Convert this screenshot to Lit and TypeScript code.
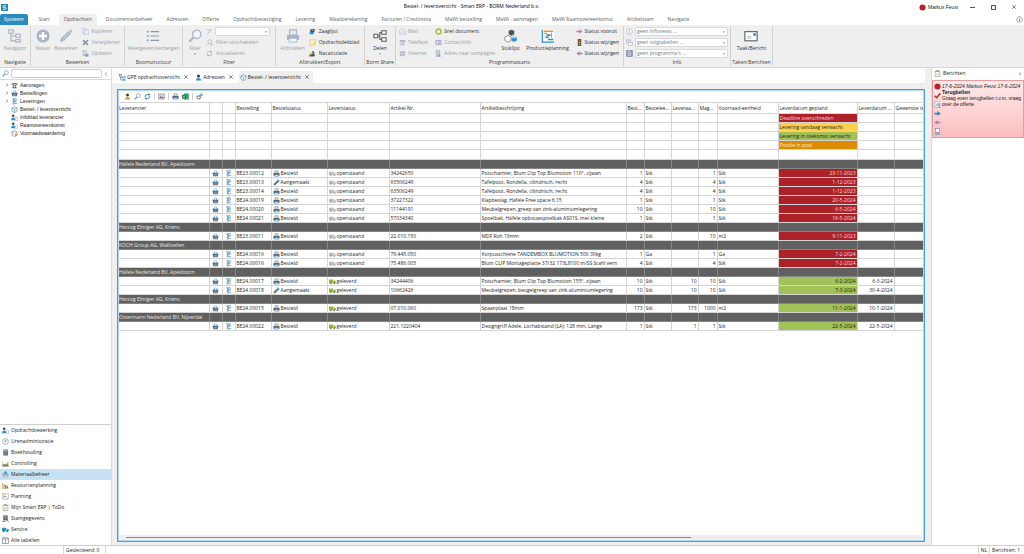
import { LitElement, html, css, svg } from "lit";
import { customElement } from "lit/decorators.js";
import { classMap } from "lit/directives/class-map.js";

const BLUE = "#2f8fc7";
const MUTE = "#a9b4c8";
const DARK = "#555b60";

/* 16 x 16 glyphs used by every bar, tree and table cell */
const glyphs: Record<string, unknown> = {
  logo: svg`<rect width="16" height="16" fill="#2586bd"/><path d="M11.5 4H6.2Q4.5 4 4.5 6T6.200 8H9.800Q11.5 8 11.5 10T9.800 12H4.500" fill="none" stroke="#fff" stroke-width="2"/>`,
  tree: svg`<g fill="none" stroke="${MUTE}" stroke-width="1.300"><rect x="1" y="1" width="5" height="4"/><rect x="9" y="6" width="5" height="3.500"/><rect x="9" y="12" width="5" height="3"/><path d="M3.500 5V13.500H9M3.500 8H9"/></g>`,
  treeDark: svg`<g fill="none" stroke="#60717d" stroke-width="1.400"><rect x="1" y="1" width="5" height="4"/><rect x="9" y="6" width="5" height="3.500" stroke="${BLUE}"/><rect x="9" y="12" width="5" height="3" stroke="${BLUE}"/><path d="M3.500 5V13.500H9M3.500 8H9"/></g>`,
  plus: svg`<circle cx="8" cy="8" r="7.500" fill="${MUTE}"/><path d="M8 3.500V12.500M3.500 8H12.500" stroke="#fff" stroke-width="2.800"/>`,
  pencil: svg`<path d="M1 15L2.500 10.500L11 2L14 5L5.500 13.500Z" fill="${MUTE}"/><path d="M11.700 1.300Q13 0 14.500 1.500T14.700 4.300Z" fill="${MUTE}"/><path d="M4.500 11.500L11.500 4.500" stroke="#eee" stroke-width=".9"/>`,
  pencilDark: svg`<path d="M1 15L2.500 10.500L11 2L14 5L5.500 13.500Z" fill="#5b6c78"/><path d="M10 1L15 5.500" stroke="${BLUE}" stroke-width="2"/>`,
  copy: svg`<g fill="#eef1f6" stroke="${MUTE}" stroke-width="1.300"><path d="M1.500 1H7L9.500 4V12H1.500Z"/><path d="M6 4H12L14.500 7V15H6Z"/></g>`,
  cross: svg`<path d="M2.500 2.500L13.500 13.500M13.500 2.500L2.500 13.500" stroke="#8e99ac" stroke-width="4"/>`,
  update: svg`<path d="M2 1H9L11 4V13H2Z" fill="#c5cddb" stroke="${MUTE}"/><path d="M4 5H9M4 8H9" stroke="#fff"/><path d="M7 9H15V15H7Z" fill="#8fa0bb"/>`,
  list: svg`<g fill="#9aa5ba"><circle cx="2" cy="3" r="1.200"/><circle cx="2" cy="8" r="1.200"/><circle cx="2" cy="13" r="1.200"/></g><path d="M5 3H15M5 8H15M5 13H15" stroke="#8d98ac" stroke-width="1.400"/>`,
  lens: svg`<circle cx="10" cy="6" r="4.800" fill="#f3f5f8" stroke="${MUTE}" stroke-width="1.400"/><path d="M6.500 9.500L1.500 14.500" stroke="${MUTE}" stroke-width="2.600"/>`,
  lensDark: svg`<circle cx="10" cy="6" r="4.500" fill="#fff" stroke="#6d7d89" stroke-width="1.300"/><path d="M6.500 9.500L1.500 14.500" stroke="${BLUE}" stroke-width="2.400"/>`,
  wrench: svg`<path d="M3 14L9 7L13 3M2 3L5 6L9 3" fill="none" stroke="${MUTE}" stroke-width="2"/>`,
  lensOff: svg`<circle cx="9" cy="6" r="4.500" fill="none" stroke="${MUTE}" stroke-width="1.500"/><path d="M6 9.500L2 14M10 11L15 15M15 11L10 15" stroke="${MUTE}" stroke-width="1.600"/>`,
  refresh: svg`<path d="M3 9V6Q3 3.500 6 3.500H11M13 7V10Q13 12.500 10 12.500H5" fill="none" stroke="${MUTE}" stroke-width="2.200"/><path d="M10 0L14.500 3.500L10 7ZM6 9L1.500 12.500L6 16Z" fill="${MUTE}"/>`,
  refreshBlue: svg`<path d="M2.500 9Q2.500 3.500 8 3.500H11M13.500 7Q13.500 12.500 8 12.500H5" fill="none" stroke="${BLUE}" stroke-width="2.200"/><path d="M10 0L14.500 3.500L10 7Z" fill="#56646e"/><path d="M6 9L1.500 12.500L6 16Z" fill="${BLUE}"/>`,
  printer: svg`<path d="M4 1H12V7H4Z" fill="#e3e7ee" stroke="${MUTE}" stroke-width="1.200"/><path d="M1 7H15V12.500H1Z" fill="${MUTE}"/><path d="M3.500 10.500H12.500V15H3.500Z" fill="#f2f4f8" stroke="${MUTE}"/>`,
  printerDark: svg`<path d="M4.500 2H11.500V7H4.500Z" fill="#fff" stroke="#53636f" stroke-width="1.300"/><path d="M1 7H15V13H1Z" fill="#53636f"/><path d="M4 11H12V14.500H4Z" fill="#fff" stroke="${BLUE}" stroke-width="1.200"/>`,
  saw: svg`<path d="M4 2H14L12 9H2Z" fill="#44525c"/><path d="M5.500 5H12" stroke="#fff" stroke-width="1.200"/><path d="M2 9L12 9L10 14H1Z" fill="${BLUE}"/>`,
  note: svg`<path d="M1.500 1.500H14.500V10.500L10.500 14.500H1.500Z" fill="#fdf1bd" stroke="#edc44c" stroke-width="1.400"/><path d="M10.500 14.500V10.500H14.500" fill="#edc44c" stroke="#edc44c"/>`,
  calc: svg`<path d="M7 1L13 6L9 9Z" fill="#333b42"/><path d="M1 10Q7 6 14 11L12 15H1Z" fill="#4a545c"/><circle cx="4" cy="9" r="2.600" fill="#f0c12e"/>`,
  share: svg`<g fill="#fff" stroke="${DARK}" stroke-width="1.200"><rect x="1" y="6" width="4.500" height="4"/><rect x="10" y="2" width="5" height="4"/><rect x="10" y="10" width="5" height="4"/><path d="M5.500 8H7.800M10 4H7.800V12H10" fill="none"/></g>`,
  mail: svg`<path d="M1.500 6L8 1.500L14.500 6V14H1.500Z" fill="#f3f5f9" stroke="${MUTE}" stroke-width="1.300"/><path d="M2 13L8 8L14 13" fill="none" stroke="${MUTE}" stroke-width="1.300"/>`,
  phone: svg`<path d="M1 6Q1 2 8 2T15 6H11V4.500H5V6Z" fill="#8d9ab3"/><path d="M5 6H11L13 14H3Z" fill="${MUTE}"/><circle cx="8" cy="10" r="2" fill="#eef"/>`,
  phoneDark: svg`<path d="M1 6Q1 2 8 2T15 6H11V4.500H5V6Z" fill="#4d4f52"/><path d="M5 6H11L13 14H3Z" fill="#5f6265"/><circle cx="8" cy="10" r="2" fill="#fff"/>`,
  globe: svg`<circle cx="8" cy="8" r="6.500" fill="${MUTE}"/><path d="M1.500 8H14.500M8 1.500Q3 8 8 14.500M8 1.500Q13 8 8 14.500" fill="none" stroke="#eef1f7"/>`,
  ring: svg`<circle cx="8" cy="8" r="5.500" fill="#fff" stroke="#9ec436" stroke-width="3.600"/>`,
  card: svg`<rect x="1" y="2" width="14" height="12" fill="#a7b3c9"/><circle cx="5.500" cy="7" r="2" fill="#fff"/><path d="M2.500 13Q5.500 8 8.500 13M10 6H14M10 9H14" fill="none" stroke="#fff"/>`,
  campaign: svg`<path d="M3 1H11V15H3Z" fill="#b8c2d4" stroke="#8f9db7"/><path d="M5 4H9M5 7H9" stroke="#fff"/><path d="M8 10L15 14H8Z" fill="#8090ad"/>`,
  parts: svg`<g stroke="#fff" stroke-width=".5"><path d="M5 2L8.500 .5L12 2V6L8.500 8L5 6Z" fill="#4b5359"/><path d="M1 9L4.500 7.500L8 9V13L4.500 15L1 13Z" fill="#fff" stroke="#666" stroke-width=".8"/><path d="M8 9L11.500 7.500L15 9V13L11.500 15L8 13Z" fill="${BLUE}"/><path d="M8 9L11.500 10.500L15 9L11.500 7.500Z" fill="#9cd0ee"/></g>`,
  gantt: svg`<rect x="1" y="1" width="14" height="14" fill="#fff"/><path d="M1.500 1V15H15" fill="none" stroke="${BLUE}" stroke-width="1.400"/><path d="M3 2.500H14M3 5H7" stroke="#e09b3c" stroke-width="1.600"/><path d="M6 7H11" stroke="#53626c" stroke-width="1.600"/><path d="M5 9.500H9M8 12H14" stroke="${BLUE}" stroke-width="1.600"/><path d="M12 4V10" stroke="#e09b3c" stroke-width="1.300"/>`,
  right: svg`<path d="M1 6.500H8V3L15 8L8 13V9.500H1Z" fill="#b27fb5"/>`,
  left: svg`<path d="M15 6.500H8V3L1 8L8 13V9.500H15Z" fill="#b27fb5"/>`,
  rightBlue: svg`<path d="M1 6H8V2.500L15.500 8L8 13.500V10H1Z" fill="#2f86c0"/>`,
  traffic: svg`<rect x="4" y="0" width="8" height="16" rx="1" fill="#5a5248"/><circle cx="8" cy="3.300" r="2" fill="#d9523f"/><circle cx="8" cy="8" r="2" fill="#e8b93c"/><circle cx="8" cy="12.700" r="2" fill="#7aae3a"/>`,
  info: svg`<circle cx="8" cy="8" r="6.500" fill="#fff" stroke="#8ea6c6" stroke-width="1.300"/><path d="M8 4V5.700M8 7V12" stroke="#7f93b5" stroke-width="1.800"/>`,
  infoBlue: svg`<circle cx="8" cy="8" r="6.500" fill="#fff" stroke="#5a6c79" stroke-width="1.200"/><path d="M8 4V5.700M8 7V12" stroke="${BLUE}" stroke-width="2.200"/>`,
  tables: svg`<g fill="#f3f5f9" stroke="${MUTE}" stroke-width="1.300"><rect x="1.500" y="2" width="9" height="7"/><rect x="6" y="8" width="8.500" height="6.500"/></g><path d="M1.500 4H10.500" stroke="${MUTE}" stroke-width="1.500"/>`,
  program: svg`<rect x=".5" y=".5" width="15" height="15" fill="#7c89a3"/><path d="M5 3.500H9.500Q11.500 4 11 6T9 8Q12 8.500 11.500 10.500T9.500 12.500H5Z" fill="none" stroke="#fff" stroke-width="1.500"/><path d="M5 8H9" stroke="#fff"/>`,
  letter: svg`<rect x="1" y="3" width="14" height="10.500" fill="#fff" stroke="#5b6267" stroke-width="1.300"/><rect x="10.500" y="4.800" width="3" height="3" fill="${BLUE}"/><path d="M3.500 8.500H8.500M3.500 10.500H8.500" stroke="#9aa2a8" stroke-width=".8"/>`,
  basket: svg`<path d="M1 6.500H15L13 14.500H3Z" fill="#566977"/><path d="M4 7L7 1.500M12 7L9 1.500" stroke="${BLUE}" stroke-width="1.600"/><path d="M5.500 8.500V13M8 8.500V13M10.500 8.500V13" stroke="#cfdbe4" stroke-width=".9"/>`,
  handtruck: svg`<path d="M3 1.500H5.500V11.500M5.500 9L12 7.500" fill="none" stroke="#5a6c79" stroke-width="1.500"/><path d="M7 2L11.500 1.200L12.500 5.800L8 6.800Z" fill="#fff" stroke="${BLUE}" stroke-width="1.500"/><circle cx="6.500" cy="12.500" r="1.800" fill="#fff" stroke="#5a6c79" stroke-width="1.300"/><path d="M8.500 13.300L14 12" stroke="${BLUE}" stroke-width="1.600"/>`,
  box: svg`<path d="M2 4.500L8 1.500L14 4.500V11.500L8 15L2 11.500Z" fill="#fff" stroke="#667884" stroke-width="1.300"/><path d="M2 4.500L8 7.500L14 4.500M8 7.500V15" fill="none" stroke="${BLUE}" stroke-width="1.400"/>`,
  personDoc: svg`<circle cx="5" cy="4" r="3" fill="#3f4d57"/><path d="M0 14Q0 8 5 8T9.500 14Z" fill="${BLUE}"/><path d="M10 7H15V15H10Z" fill="#fff" stroke="#8b979f"/>`,
  person: svg`<circle cx="8" cy="4.500" r="3.500" fill="#2f4250"/><path d="M2 15Q2 9 8 9T14 15Z" fill="${BLUE}"/>`,
  personGold: svg`<circle cx="8" cy="4.500" r="3.500" fill="#5c4420"/><path d="M2 15Q2 9 8 9T14 15Z" fill="#e59a24"/>`,
  stock: svg`<path d="M2 4.500L8 1.500L14 4.500V11.500L8 15L2 11.500Z" fill="#fff" stroke="#777" stroke-width="1.400"/><path d="M2 4.500L8 7.500L14 4.500" fill="none" stroke="#777"/><circle cx="11.500" cy="11.500" r="2.700" fill="#d99433"/>`,
  image: svg`<rect x="1" y="2" width="14" height="12" fill="#d9dcde" stroke="#70777c"/><path d="M2.500 12L6 7L9 10L11 8L14 12Z" fill="#6c7378"/><path d="M3 4.500H13" stroke="#9aa0a4"/>`,
  excel: svg`<rect x="5" y="1" width="10.500" height="14" fill="#35a56a"/><rect x="0" y="4" width="9" height="9" fill="#14713f"/><path d="M2.500 6L6.500 11M6.500 6L2.500 11" stroke="#fff" stroke-width="1.300"/>`,
  gears: svg`<circle cx="6" cy="10" r="3.800" fill="none" stroke="#50616d" stroke-width="2.600" stroke-dasharray="2.200 .6"/><circle cx="12" cy="4" r="2.300" fill="none" stroke="${BLUE}" stroke-width="2.200"/>`,
  truckOpen: svg`<path d="M0 4H9.500V11.500H0Z" fill="#b9bbbd"/><path d="M10 6H13.500L15.500 8.500V11.500H10Z" fill="#d6d8da" stroke="#a2a5a8" stroke-width=".8"/><circle cx="4" cy="12" r="1.500" fill="#8b8e91"/><circle cx="12" cy="12" r="1.500" fill="#8b8e91"/>`,
  truckDone: svg`<path d="M0 3.500H9.500V11.500H0Z" fill="#8fb93a"/><path d="M10 5.500H13.500L16 8.500V11.500H10Z" fill="#8fb93a"/><circle cx="4" cy="12.300" r="1.800" fill="#5d6b31"/><circle cx="12" cy="12.300" r="1.800" fill="#5d6b31"/>`,
  truckBlue: svg`<path d="M0 4H9.500V11.500H0Z" fill="${BLUE}"/><path d="M10 6H13.500L16 8.500V11.500H10Z" fill="#3fa6dd"/><circle cx="4" cy="12.300" r="1.800" fill="#38536a"/><circle cx="12" cy="12.300" r="1.800" fill="#38536a"/>`,
  clock: svg`<circle cx="8" cy="8" r="6.500" fill="#fff" stroke="#6b7c88" stroke-width="1.300"/><path d="M8 4V8.500L5 6.500M8 8.500L12 6" fill="none" stroke="${BLUE}" stroke-width="1.300"/>`,
  ledger: svg`<rect x="3" y="1" width="10.500" height="14" rx="1" fill="#5b6b76"/><rect x="4.800" y="2.800" width="7" height="3" fill="#9cc3da"/><path d="M5 8H12M5 10.500H12M5 13H12" stroke="#9fabb4" stroke-dasharray="1.500 1"/>`,
  chart: svg`<path d="M1 3V14.500H15" fill="none" stroke="#6c7c87"/><path d="M2 14V10L6 8L9 10L14.500 3V14Z" fill="#e5972c"/><path d="M2 14V12L7 10L14.500 11V14Z" fill="${BLUE}"/>`,
  stockroom: svg`<path d="M1 8L5 3.500L8 1L11 3.500L15 8L8 15Z" fill="#a9bfcc" stroke="#67808f"/><path d="M8 1V9M5 4.500L8 1L11 4.500" fill="none" stroke="${BLUE}" stroke-width="1.800"/><path d="M3 9L8 11L13 9V13L8 15.500L3 13Z" fill="#e9eef1" stroke="#74858f"/>`,
  resources: svg`<path d="M1 2V15H15" fill="none" stroke="#d39037" stroke-width="1.500"/><path d="M3 5H6V14H3Z" fill="#e3a14a"/><path d="M7 7H10V14H7Z" fill="#6c7b86"/><path d="M11 9H14V14H11Z" fill="${BLUE}"/>`,
  planning: svg`<rect x="1.500" y="1.500" width="13" height="13" fill="#fff" stroke="#8b9aa5"/><path d="M3 4H9" stroke="#dda13b" stroke-width="1.800"/><path d="M5 8H10" stroke="#52606a" stroke-width="1.500"/><path d="M8 11.500H14" stroke="#dda13b" stroke-width="1.800"/><path d="M4 6V13" stroke="${BLUE}"/>`,
  clipboard: svg`<rect x="2.500" y="2.500" width="11" height="12.500" fill="#fff" stroke="#7d8a78" stroke-width="1.300"/><rect x="5.500" y=".8" width="5" height="3" fill="#6f7c6c"/><path d="M5 9L7.500 11.500L11 6.500" fill="none" stroke="#8bb33a" stroke-width="1.500"/>`,
  master: svg`<rect x="3" y="1" width="10" height="11" fill="#515c64"/><path d="M5 3.500H11M5 6H11M5 8.500H11" stroke="#c9d0d5"/><path d="M1 14.500H8M10 11L15 15" stroke="#4d5860" stroke-width="1.800"/>`,
  table: svg`<rect x="1.500" y="2" width="13" height="12.500" fill="#fff" stroke="#5e666c" stroke-width="1.300"/><path d="M1.500 4.500H14.500M8 4.500V14.500" stroke="#5e666c" stroke-width="1.300"/>`,
  dot: svg`<circle cx="8" cy="8" r="7" fill="#b8202e"/>`,
  check: svg`<path d="M1.500 8.500L6 13L14.500 3" fill="none" stroke="#b8202e" stroke-width="3.200"/>`,
  docLens: svg`<path d="M2 1H10L13 4V15H2Z" fill="#fff" stroke="#7f8c96" stroke-width="1.200"/><circle cx="9" cy="9" r="3.200" fill="#bfe0f3" stroke="${BLUE}" stroke-width="1.200"/><path d="M11 11L15 15" stroke="${BLUE}" stroke-width="1.600"/>`,
  pc: svg`<rect x="3" y="1.500" width="10" height="8.500" fill="#fff" stroke="#6b7881" stroke-width="1.300"/><path d="M5.500 12H10.500" stroke="#6b7881"/><path d="M1 14H15" stroke="${BLUE}" stroke-width="1.800"/>`,
  caret: svg`<path d="M3 6L8 11L13 6Z" fill="#777"/>`,
  chevRight: svg`<path d="M5 2L11 8L5 14" fill="none" stroke="#444" stroke-width="2.400"/>`,
  chevLeft: svg`<path d="M11 2L5 8L11 14" fill="none" stroke="#444" stroke-width="2"/>`,
  close: svg`<path d="M1 1L15 15M15 1L1 15" stroke="#333" stroke-width="2.400"/>`,
  minimize: svg`<path d="M0 8H16" stroke="#222" stroke-width="2.400"/>`,
  maximize: svg`<rect x="2" y="2" width="12" height="12" fill="none" stroke="#222" stroke-width="2.600"/>`,
};

const icon = (name: string, size = "s") =>
  html`<svg class="ic ${size}" viewBox="0 0 16 16" aria-hidden="true">${glyphs[name]}</svg>`;

type Cmd = [glyph: string, text: string, muted?: boolean];

const menu = ["Start", "Opdrachten", "Documentenbeheer", "Adressen", "Offerte", "Opdrachtbevestiging", "Levering",
  "Maatberekening", "Facturen / Creditnota", "MaWi bestelling", "MaWi - aanvragen", "MaWi Raamovereenkomst",
  "Artikelstam", "Navigatie"];

const treeItems: [string, string, boolean][] = [
  ["phoneDark", "Aanvragen", true], ["basket", "Bestellingen", true], ["handtruck", "Leveringen", true],
  ["box", "Bestel- / leveroverzicht", false], ["personDoc", "Infoblad leverancier", false],
  ["personDoc", "Raamovereenkomst", false], ["stock", "Voorraadwaardering", false],
];

const modules: [string, string][] = [
  ["personDoc", "Opdrachtbewerking"], ["clock", "Urenadministratie"], ["ledger", "Boekhouding"],
  ["chart", "Controlling"], ["stockroom", "Materiaalbeheer"], ["resources", "Resourcenplanning"],
  ["planning", "Planning"], ["clipboard", "Mijn Smart ERP | ToDo"], ["master", "Stamgegevens"],
  ["truckBlue", "Service"], ["table", "Alle tabellen"],
];

const columns = ["Leverancier", "", "", "Bestelling", "Bestelstatus", "Leverstatus", "Artikel-Nr.",
  "Artikelbeschrijving", "Best...", "Bestelee...", "Leveraa...", "Mag...", "Voorraad-eenheid",
  "Leverdatum gepland", "Leverdatum ...", "Gewenste te"];

const legend: [string, string][] = [
  ["Deadline overschreden", "late"], ["Levering vandaag verwacht", "today"],
  ["Levering in toekomst verwacht", "future"], ["Positie in pool", "pool"],
];

interface Line {
  nr: string; made?: boolean; art: string; text: string; qty: number; unit: string;
  got?: number; stock: number; stockUnit?: string; due: string; done?: string;
}

const groups: { supplier: string; lines: Line[] }[] = [
  { supplier: "Häfele Nederland BV, Apeldoorn", lines: [
    { nr: "BE23.00012", art: "34242650", text: "Potscharnier, Blum Clip Top Blumotion 110°, zijwan", qty: 1, unit: "Stk", stock: 1, due: "23-11-2023" },
    { nr: "BE23.00013", made: true, art: "63506249", text: "Tafelpoot, Rondella, cilindrisch, recht", qty: 4, unit: "Stk", stock: 4, due: "1-12-2023" },
    { nr: "BE23.00014", art: "63506249", text: "Tafelpoot, Rondella, cilindrisch, recht", qty: 4, unit: "Stk", stock: 4, due: "1-12-2023" },
    { nr: "BE24.00019", art: "37227322", text: "Klapbeslag, Häfele Free space 6.15", qty: 1, unit: "Stk", stock: 1, due: "20-5-2024" },
    { nr: "BE24.00020", art: "11144191", text: "Meubelgrepen, greep van zink-aluminiumlegering", qty: 10, unit: "Stk", stock: 10, due: "6-5-2024" },
    { nr: "BE24.00021", art: "57034340", text: "Spoelbak, Häfele opbouwspoelbak AS01S, met kleine", qty: 1, unit: "Stk", stock: 1, due: "16-5-2024" },
  ] },
  { supplier: "Herzog Elmiger AG, Kriens", lines: [
    { nr: "BE23.00011", art: "22.010.150", text: "MDF Roh 19mm", qty: 2, unit: "Stk", stock: 10, stockUnit: "m2", due: "9-11-2023" },
  ] },
  { supplier: "KOCH Group AG, Wallisellen", lines: [
    { nr: "BE24.00016", art: "79.445.050", text: "Korpusschiene TANDEMBOX BLUMOTION 500 30kg", qty: 1, unit: "Ga", stock: 1, due: "7-2-2024" },
    { nr: "BE24.00016", art: "75.486.005", text: "Blum CLIP Montageplatte 37/32 173L8100 m/SS Stahl vern", qty: 4, unit: "Stk", stock: 4, due: "7-2-2024" },
  ] },
  { supplier: "Häfele Nederland BV, Apeldoorn", lines: [
    { nr: "BE24.00017", art: "34244406", text: "Potscharnier, Blum Clip Top Blumotion 155º, zijwan", qty: 10, unit: "Stk", got: 10, stock: 10, due: "6-2-2024", done: "6-3-2024" },
    { nr: "BE24.00018", made: true, art: "10662426", text: "Meubelgrepen, beugelgreep van zink-aluminiumlegering", qty: 10, unit: "Stk", got: 10, stock: 10, due: "7-3-2024", done: "30-4-2024" },
  ] },
  { supplier: "Herzog Elmiger AG, Kriens", lines: [
    { nr: "BE24.00015", art: "07.010.060", text: "Spaanplaat 18mm", qty: 173, unit: "Stk", got: 173, stock: 1000, stockUnit: "m2", due: "11-1-2024", done: "10-1-2024" },
  ] },
  { supplier: "Ostermann Nederland BV, Nijverdal", lines: [
    { nr: "BE24.00022", art: "221.1220404", text: "Designgriff Adele, Lochabstand (LA): 128 mm, Länge", qty: 1, unit: "Stk", got: 1, stock: 1, due: "22-5-2024", done: "22-5-2024" },
  ] },
];

const base = css`
  * { box-sizing: border-box; }
  button, input, select { font: inherit; color: inherit; margin: 0; padding: 0; border: 0; background: none; border-radius: 0; }
  button { display: flex; align-items: center; white-space: nowrap; cursor: pointer; }
  .ic { display: block; flex: none; }
  .xs { width: 4px; height: 4px; }
  .w { width: 5px; height: 5px; }
  .s { width: 7px; height: 7px; }
  .l { width: 14px; height: 14px; }
`;

@customElement("erp-ribbon")
export class ErpRibbon extends LitElement {
  static styles = [base, css`
    :host { display: block; }
    .title { display: flex; align-items: center; height: 14px; padding: 0 8px 0 1px; }
    .title h1 { flex: 1; margin: 0; font-size: 5px; font-weight: 400; color: #000; text-align: center; padding-left: 16px; padding-bottom: 1px; }
    .window { display: flex; align-items: center; gap: 16px; }
    .user { display: flex; align-items: center; gap: 2px; font-family: "Liberation Sans", sans-serif; margin-right: -4px; }
    .menu { display: flex; gap: 4px; height: 11px; padding-right: 1px; }
    .menu button { padding: 0 5px; color: #5c6268; }
    .menu .system { background: #2a8bc0; color: #fff; padding: 0 4px; margin-right: 2px; border-radius: 2px 2px 0 0; }
    .menu .on { background: #efefef; border-radius: 2px 2px 0 0; color: #555; }
    .help { margin-left: auto; align-self: center; }
    .bar { display: flex; height: 43px; padding: 1px 0; background: #efefef; border-bottom: 1px solid #d6d6d6; }
    .group { flex: none; display: flex; flex-direction: column; border-right: 1px solid #d2d2d2; }
    .w31 { width: 31px; } .w94 { width: 94px; } .w58 { width: 58px; } .w93 { width: 93px; } .w89 { width: 89px; }
    .w228 { width: 228px; } .w107 { width: 107px; } .w42 { width: 42px; }
    .body { flex: 1; min-height: 0; display: flex; align-items: stretch; justify-content: center; gap: 4px; }
    .wide { justify-content: space-between; padding: 0 4px 0 3px; }
    .name { flex: none; text-align: center; line-height: 7px; color: #3c3c3c; }
    .big { flex-direction: column; justify-content: flex-start; gap: 2px; padding-top: 3px; color: #2f2f2f; line-height: 7px; }
    .muted { color: #9a9da3; }
    .caret { margin-top: -2px; }
    .col { display: grid; grid-template-rows: repeat(3, 11px); align-items: center; justify-items: start; color: #2f2f2f; }
    .col .muted { color: #9a9da3; }
    .col button { gap: 3px; height: 11px; }
    .wide .col button { gap: 2px; }
    .field { display: flex; align-items: center; gap: 2px; }
    .combo { display: grid; align-items: center; width: 93px; height: 9px; background: #fff; border: 1px solid #d9d9d9; border-radius: 1px; }
    .combo.narrow { width: 55px; }
    .combo select, .combo .ic { grid-area: 1 / 1; }
    .combo select { width: 100%; height: 7px; appearance: none; padding-left: 1px; color: #76797d; line-height: 7px; }
    .combo .ic { justify-self: end; margin-right: 1px; pointer-events: none; }
  `];

  big([glyph, text, muted]: Cmd, caret = false) {
    return html`<button class="big ${classMap({ muted: !!muted })}">${icon(glyph, "l")}${text}
      ${caret ? html`<span class="caret">${icon("caret", "xs")}</span>` : ""}</button>`;
  }

  col(items: Cmd[]) {
    return html`<div class="col">${items.map(([g, t, muted]) =>
      html`<button class=${classMap({ muted: !!muted })}>${icon(g)}${t}</button>`)}</div>`;
  }

  combo(glyph: string, label: string, text: string) {
    return html`<div class="field">${icon(glyph)}<div class="combo"><select aria-label=${label}><option>${text}</option></select>${icon("caret", "xs")}</div></div>`;
  }

  group(width: string, name: string, body: unknown, wide = false) {
    return html`<section class="group ${width}"><div class="body ${classMap({ wide })}">${body}</div><div class="name">${name}</div></section>`;
  }

  render() {
    return html`
      <header class="title">
        ${icon("logo")}
        <h1>Bestel- / leveroverzicht - Smart ERP - BORM Nederland b.v.</h1>
        <div class="window">
          <span class="user">${icon("dot")}Markus Feusi</span>
          <button aria-label="Minimaliseren">${icon("minimize", "w")}</button>
          <button aria-label="Maximaliseren">${icon("maximize", "w")}</button>
          <button aria-label="Sluiten">${icon("close", "xs")}</button>
        </div>
      </header>
      <nav class="menu">
        <button class="system">Systeem</button>
        ${menu.map((m) => html`<button class=${classMap({ on: m === "Opdrachten" })}>${m}</button>`)}
        <span class="help">${icon("infoBlue")}</span>
      </nav>
      <div class="bar">
        ${this.group("w31", "Navigatie", this.big(["tree", "Navigator", true]))}
        ${this.group("w94", "Bewerken", html`
          ${this.big(["plus", "Nieuw", true])}${this.big(["pencil", "Bewerken", true])}
          ${this.col([["copy", "Kopiëren", true], ["cross", "Verwijderen", true], ["update", "Updaten", true]])}`)}
        ${this.group("w58", "Boomstructuur", this.big(["list", "Weergeven/verbergen", true]))}
        ${this.group("w93", "Filter", html`
          ${this.big(["lens", "Filter", true], true)}
          <div class="col">
            <div class="field">${icon("wrench")}<div class="combo narrow"><select aria-label="Filter"><option></option></select>${icon("caret", "xs")}</div></div>
            <button class="muted">${icon("lensOff")}Filter uitschakelen</button>
            <button class="muted">${icon("refresh")}Actualiseren</button>
          </div>`)}
        ${this.group("w89", "Afdrukken/Export", html`
          ${this.big(["printer", "Afdrukken", true])}
          ${this.col([["saw", "Zaaglijst"], ["note", "Opdrachtdekblad"], ["calc", "Nacalculatie"]])}`)}
        ${this.group("w31", "Borm Share", this.big(["share", "Delen"], true))}
        ${this.group("w228", "Programmastarts", html`
          ${this.col([["mail", "Mail", true], ["phone", "Telefoon", true], ["globe", "Internet", true]])}
          ${this.col([["ring", "Snel document"], ["card", "Contactinfo", true], ["campaign", "Adres naar campagne", true]])}
          ${this.big(["parts", "Stuklijst"])}${this.big(["gantt", "Productieplanning"])}
          ${this.col([["right", "Status vooruit"], ["traffic", "Status wijzigen"], ["left", "Status wijzigen"]])}`, true)}
        ${this.group("w107", "Info", html`<div class="col">
          ${this.combo("info", "Infoviews", "geen Infoviews ...")}
          ${this.combo("tables", "Volgtabellen", "geen volgtabellen ...")}
          ${this.combo("program", "Programma's", "geen programma's ...")}</div>`)}
        ${this.group("w42", "Taken/Berichten", this.big(["letter", "Taak/Bericht"]))}
      </div>`;
  }
}

@customElement("erp-sidebar")
export class ErpSidebar extends LitElement {
  static styles = [base, css`
    :host { display: flex; flex-direction: column; background: #fff; border-right: 1px solid #dadada; }
    .search { display: flex; align-items: center; gap: 2px; height: 12px; padding: 0 3px 0 2px; border-bottom: 1px solid #dadada; }
    .search input { flex: 1; min-width: 0; height: 9px; border: 1px solid #cfcfcf; border-radius: 2px; padding: 0 2px; }
    ul { list-style: none; margin: 0; padding: 0; }
    .tree { flex: 1; padding-top: 1px; font-family: "Liberation Sans", sans-serif; color: #222; }
    .tree li { display: grid; grid-template-columns: 4px 7px auto; align-items: center; justify-content: start; column-gap: 2px; height: 8px; padding-left: 5px; }
    .tree a { color: inherit; text-decoration: none; }
    .modules { border-top: 1px solid #cfcfcf; margin-bottom: -1px; }
    .modules a { display: flex; align-items: center; gap: 2px; height: 11px; padding-left: 2px; color: #222; text-decoration: none; }
    .modules .on { background: #c6e2f3; }
  `];

  render() {
    return html`
      <div class="search">${icon("lensDark")}<input type="search" aria-label="Zoeken" />
        <button aria-label="Inklappen">${icon("chevLeft", "xs")}</button></div>
      <ul class="tree">${treeItems.map(([g, t, open]) => html`<li>
        <span>${open ? icon("chevRight", "xs") : ""}</span>${icon(g)}<a href="#">${t}</a></li>`)}</ul>
      <nav class="modules">${modules.map(([g, t]) =>
        html`<a href="#" class=${classMap({ on: t === "Materiaalbeheer" })}>${icon(g)}${t}</a>`)}</nav>`;
  }
}

@customElement("erp-orders")
export class ErpOrders extends LitElement {
  static styles = [base, css`
    :host { display: flex; flex-direction: column; min-width: 0; background: #efefef; }
    .tabs { display: flex; align-items: flex-end; gap: 2px; height: 15px; padding-left: 6px; background: #fff; }
    .tab { display: flex; align-items: center; height: 12px; padding: 0 3px 0 1px; color: #222; }
    .tab button { gap: 1px; }
    .tab .shut { padding: 0 1px 0 4px; }
    .tab.on { background: #efefef; border-radius: 2px 2px 0 0; }
    .view { flex: 1; display: flex; flex-direction: column; min-height: 0; margin: 6px 0 3px 5px; border: 1px solid #4b9fce; outline: 1px solid #b4d8ec; outline-offset: -2px; background: #fff; padding: 1px; }
    .tools { display: flex; align-items: center; gap: 3px; height: 11px; padding-left: 5px; }
    .tools i { width: 1px; height: 7px; background: #cfcfcf; }
    .grid { flex: 1; overflow: hidden; }
    table { width: 100%; border-collapse: collapse; table-layout: fixed; color: #262626; }
    .c90 { width: 90px; } .c13 { width: 13px; } .c36 { width: 36px; } .c56 { width: 56px; } .c62 { width: 62px; }
    .c91 { width: 91px; } .c146 { width: 146px; } .c18 { width: 18px; } .c27 { width: 27px; } .c19 { width: 19px; }
    .c61 { width: 61px; } .c79 { width: 79px; } .c37 { width: 37px; }
    th, td { height: 9px; padding: 0 1px; border: 1px solid #d4d4d4; font-weight: 400; text-align: left; line-height: 7px; white-space: nowrap; vertical-align: middle; }
    th:first-child, td:first-child { border-left: 0; padding-left: 0; }
    th:last-child, td:last-child { border-right: 0; }
    th { height: 11px; }
    .spacer td { height: 10px; }
    .num { text-align: right; }
    .group td, .group th { background: #606060; color: #e8e8e8; border-color: #858585; height: 9px; }
    .late { background: #ad2129; color: #f6dada; }
    .today { background: #ffd04a; }
    .future { background: #a3c159; color: #20260f; }
    .pool { background: #dd8c00; color: #fff0d4; }
    .act { padding: 0; }
    .act button { width: 100%; justify-content: center; }
    .state { display: flex; align-items: center; gap: 1px; }
    .scroll { display: flex; align-items: center; height: 5px; margin-right: 1px; padding-left: 7px; background: #efefef; }
    .thumb { width: 71%; height: 1px; background: #858585; }
  `];

  tab(glyph: string, text: string, on = false) {
    return html`<div class="tab ${classMap({ on })}"><button>${icon(glyph)}${text}</button>
      <button class="shut" aria-label="Sluiten">${icon("close", "xs")}</button></div>`;
  }

  line(l: Line) {
    const done = l.got !== undefined;
    return html`<tr>
      <td></td>
      <td class="act"><button aria-label="Bestelling">${icon("basket")}</button></td>
      <td class="act"><button aria-label="Levering">${icon("handtruck")}</button></td>
      <td>${l.nr}</td>
      <td><span class="state">${icon(l.made ? "pencilDark" : "printerDark")}${l.made ? "Aangemaakt" : "Besteld"}</span></td>
      <td><span class="state">${icon(done ? "truckDone" : "truckOpen")}${done ? "geleverd" : "openstaand"}</span></td>
      <td>${l.art}</td><td>${l.text}</td>
      <td class="num">${l.qty}</td><td>${l.unit}</td><td class="num">${l.got}</td>
      <td class="num">${l.stock}</td><td>${l.stockUnit ?? l.unit}</td>
      <td class="num ${done ? "future" : "late"}">${l.due}</td><td class="num">${l.done}</td><td></td>
    </tr>`;
  }

  blanks(n: number) {
    return Array.from({ length: n }, () => html`<td></td>`);
  }

  render() {
    return html`
      <div class="tabs">
        ${this.tab("treeDark", "GPE opdrachtoverzicht")}${this.tab("person", "Adressen")}
        ${this.tab("box", "Bestel- / leveroverzicht", true)}
      </div>
      <div class="view">
        <div class="tools">
          <button aria-label="Adres">${icon("personGold")}</button>
          <button aria-label="Zoeken">${icon("lensDark")}</button>
          <button aria-label="Vernieuwen">${icon("refreshBlue")}</button><i></i>
          <button aria-label="Afbeelding">${icon("image")}</button><i></i>
          <button aria-label="Afdrukken">${icon("printerDark")}</button>
          <button aria-label="Excel">${icon("excel")}</button><i></i>
          <button aria-label="Instellingen">${icon("gears")}</button>
        </div>
        <div class="grid">
          <table>
            <colgroup>
              ${[90, 13, 13, 36, 56, 62, 91, 146, 18, 27, 27, 19, 61, 79, 37].map((w) => html`<col class="c${w}" />`)}<col />
            </colgroup>
            <thead><tr>${columns.map((c) => html`<th>${c}</th>`)}</tr></thead>
            <tbody>
              ${legend.map(([t, cls]) => html`<tr>${this.blanks(13)}<td class=${cls}>${t}</td>${this.blanks(2)}</tr>`)}
              <tr class="spacer">${this.blanks(16)}</tr>
            </tbody>
            ${groups.map((g) => html`<tbody>
              <tr class="group"><th scope="rowgroup">${g.supplier}</th>${this.blanks(15)}</tr>
              ${g.lines.map((l) => this.line(l))}</tbody>`)}
          </table>
        </div>
        <div class="scroll"><div class="thumb"></div></div>
      </div>`;
  }
}

@customElement("erp-messages")
export class ErpMessages extends LitElement {
  static styles = [base, css`
    :host { display: block; background: #fff; border-left: 1px solid #dadada; font-family: "Liberation Sans", sans-serif; color: #222; }
    .head { display: flex; align-items: center; gap: 2px; height: 11px; padding: 0 2px; font-family: "Open Sans", sans-serif; }
    .head button { margin-left: auto; }
    .msg { display: flex; gap: 1px; margin-top: 1px; padding: 2px 1px; border: 1px solid #e89a9e; background: linear-gradient(#ffe9e9, #fbbfc1); }
    .marks { display: flex; flex-direction: column; gap: 2px; }
    p { margin: 0; line-height: 6px; white-space: nowrap; }
    .when { font-style: italic; }
    .subject { font-weight: 700; }
  `];

  render() {
    return html`
      <div class="head">${icon("clipboard")}Berichten<button aria-label="Inklappen">${icon("chevRight", "xs")}</button></div>
      <article class="msg">
        <div class="marks">${["dot", "check", "docLens", "rightBlue", "left", "pc"].map((g) => icon(g))}</div>
        <div>
          <p class="when">17-6-2024 Markus Feusi 17-6-2024</p>
          <p class="subject">Terugbellen</p>
          <p>Graag even terugbellen i.v.m. vraag<br />over de offerte</p>
        </div>
      </article>`;
  }
}

@customElement("app-root")
export class AppRoot extends LitElement {
  static styles = [base, css`
    :host { display: flex; flex-direction: column; height: 100vh; overflow: hidden; background: #fff; font: 5px/7px "Open Sans", "Noto Sans", sans-serif; color: #222; }
    .main { flex: 1; min-height: 0; display: grid; grid-template-columns: 112px minmax(0, 1fr) 6px 93px; background: #efefef; }
    .right { grid-column: 4; }
    .status { display: flex; height: 9px; align-items: stretch; border-top: 1px solid #cfcfcf; line-height: 8px; }
    .status span { border-left: 1px solid #d6d6d6; padding: 0 2px; }
    .status .count { margin-left: 63px; padding-right: 6px; border-right: 1px solid #d6d6d6; }
    .status .lang { margin-left: auto; }
    .status .total { padding-right: 4px; }
  `];

  render() {
    return html`
      <erp-ribbon></erp-ribbon>
      <main class="main">
        <erp-sidebar></erp-sidebar>
        <erp-orders></erp-orders>
        <erp-messages class="right"></erp-messages>
      </main>
      <footer class="status">
        <span class="count">Geslecteerd: 0</span><span class="lang">NL</span><span class="total">Berichten: 1</span>
      </footer>`;
  }
}
